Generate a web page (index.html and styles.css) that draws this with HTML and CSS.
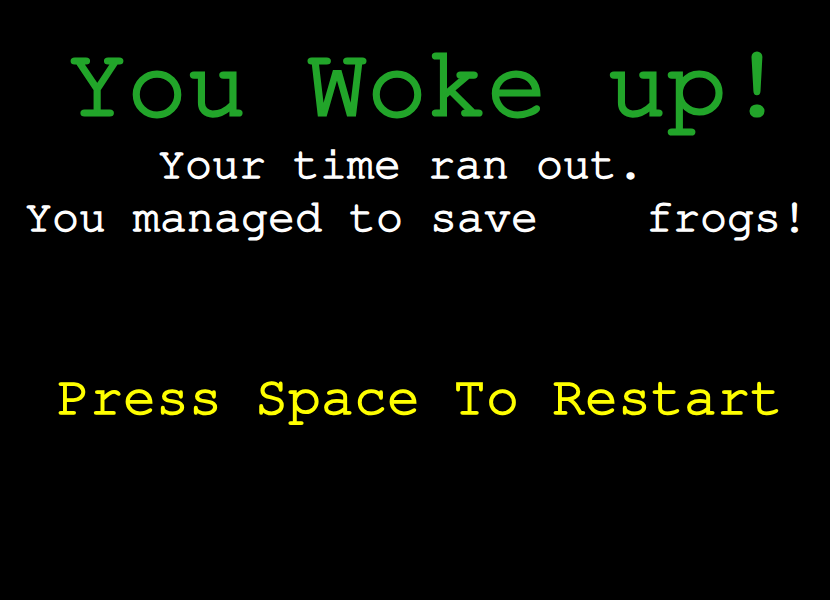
FILE: index.html
```html
<!DOCTYPE html>
<html>
<head>
<meta charset="utf-8">
<link rel="stylesheet" href="styles.css">
</head>
<body>
<main class="screen">
  <h1 class="title">You Woke up!</h1>
  <p class="msg msg-time">Your time ran out.</p>
  <p class="msg msg-save">You managed to save    frogs!</p>
  <p class="restart">Press Space To Restart</p>
</main>
</body>
</html>
```
FILE: styles.css
```css
html, body {
  margin: 0;
  padding: 0;
  background: #000;
}
.screen {
  width: 830px;
  height: 600px;
  background: #000;
  font-family: "FreeMono", "Courier New", monospace;
  font-weight: normal;
  white-space: pre;
  display: flex;
  flex-direction: column;
}
.title {
  margin: 0;
  font-weight: normal;
  font-size: 100px;
  line-height: 100px;
  color: #22a52a;
  -webkit-text-stroke: 3px #22a52a;
  padding: 35px 0 0 67px;
}
.msg {
  margin: 0;
  font-size: 45px;
  line-height: 53px;
  color: #fff;
  -webkit-text-stroke: 1.4px #fff;
}
.msg-time {
  margin-top: 3px;
  padding-left: 158px;
}
.msg-save {
  padding-left: 25px;
}
.restart {
  margin: 0;
  font-size: 55px;
  line-height: 60px;
  color: #ffff00;
  -webkit-text-stroke: 1.6px #ffff00;
  padding: 124px 0 0 57px;
}
```
